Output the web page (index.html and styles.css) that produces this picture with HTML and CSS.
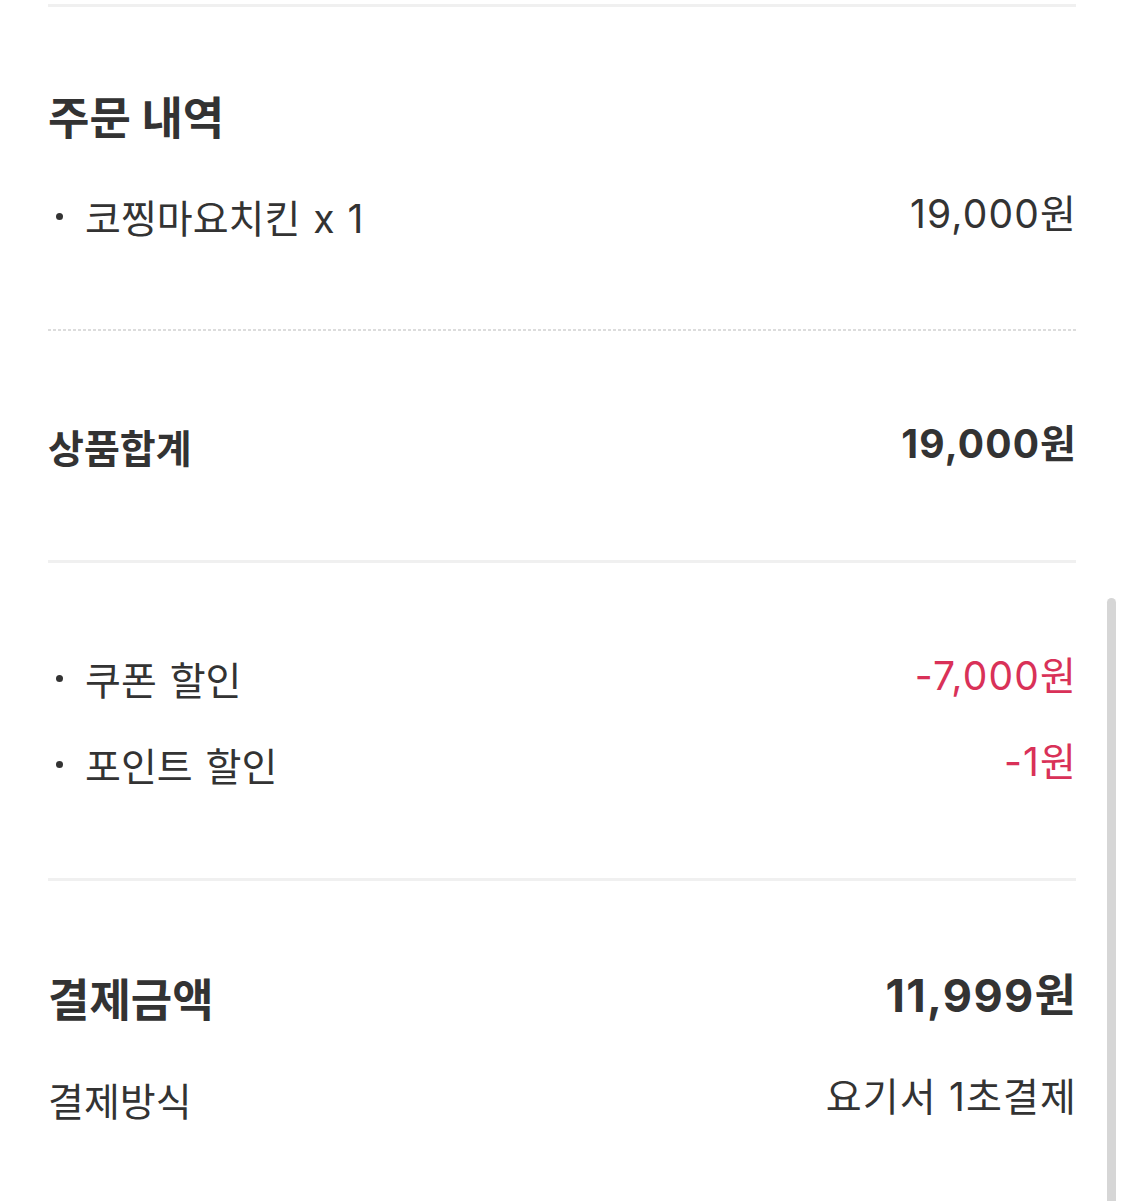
FILE: index.html
```html
<!DOCTYPE html>
<html lang="ko">
<head>
<meta charset="utf-8">
<title>주문 내역</title>
<link rel="stylesheet" href="styles.css">
</head>
<body>
<main class="page">
  <div class="rule rule-top"></div>

  <section class="order">
    <h2 class="title">주문 내역</h2>
    <ul class="list">
      <li class="row"><span class="label bullet">코찡마요치킨 x 1</span><span class="val">19,000원</span></li>
    </ul>
  </section>

  <div class="rule-dots"></div>

  <section class="block">
    <div class="row"><span class="label strong">상품합계</span><span class="val strong">19,000원</span></div>
  </section>

  <div class="rule"></div>

  <section class="block">
    <ul class="list discounts">
      <li class="row"><span class="label bullet">쿠폰 할인</span><span class="val red">-7,000원</span></li>
      <li class="row"><span class="label bullet">포인트 할인</span><span class="val red">-1원</span></li>
    </ul>
  </section>

  <div class="rule"></div>

  <section class="block total">
    <div class="row big"><span class="label strong">결제금액</span><span class="val strong">11,999원</span></div>
    <div class="row method"><span class="label">결제방식</span><span class="val">요기서 1초결제</span></div>
  </section>
</main>
<div class="scrollbar"></div>
</body>
</html>
```

FILE: styles.css
```css
html, body {
  margin: 0;
  padding: 0;
  background: #ffffff;
}
body {
  font-family: "Inter", "Noto Sans CJK KR", sans-serif;
  color: #333333;
  height: 1201px;
  overflow: hidden;
}
.page {
  padding: 4px 49px 0 48px;
}
.rule {
  height: 3px;
  background: #f0f0f0;
}
.rule-dots {
  height: 2px;
  background-image: repeating-linear-gradient(to right, #dcdcdc 0 3px, transparent 3px 5px);
}
.order {
  padding: 82px 0 83px;
}
.title {
  margin: 0 0 37px;
  height: 60px;
  line-height: 60px;
  font-size: 45px;
  font-weight: 700;
  letter-spacing: 0;
}
.list {
  list-style: none;
  margin: 0;
  padding: 0;
}
.block {
  padding: 85px 0 84px;
}
.row {
  display: flex;
  justify-content: space-between;
  align-items: center;
  height: 60px;
  font-size: 39px;
}
.label {
  letter-spacing: 0;
  word-spacing: 2px;
}
.bullet {
  display: flex;
  align-items: center;
}
.bullet::before {
  content: "";
  width: 7px;
  height: 7px;
  border-radius: 50%;
  background: #333333;
  margin: 0 22px 0 8px;
}
.val {
  padding-bottom: 10px;
  letter-spacing: 0.03em;
  margin-right: -0.03em;
}
.strong {
  font-weight: 700;
}
.red {
  color: #d93158;
}
.discounts .row + .row {
  margin-top: 26px;
}
.total {
  padding-top: 86px;
}
.big {
  font-size: 45px;
}
.method {
  margin-top: 42px;
}
.scrollbar {
  position: absolute;
  left: 1107px;
  top: 598px;
  width: 9px;
  height: 620px;
  border-radius: 5px;
  background: #d6d6d6;
}
```
